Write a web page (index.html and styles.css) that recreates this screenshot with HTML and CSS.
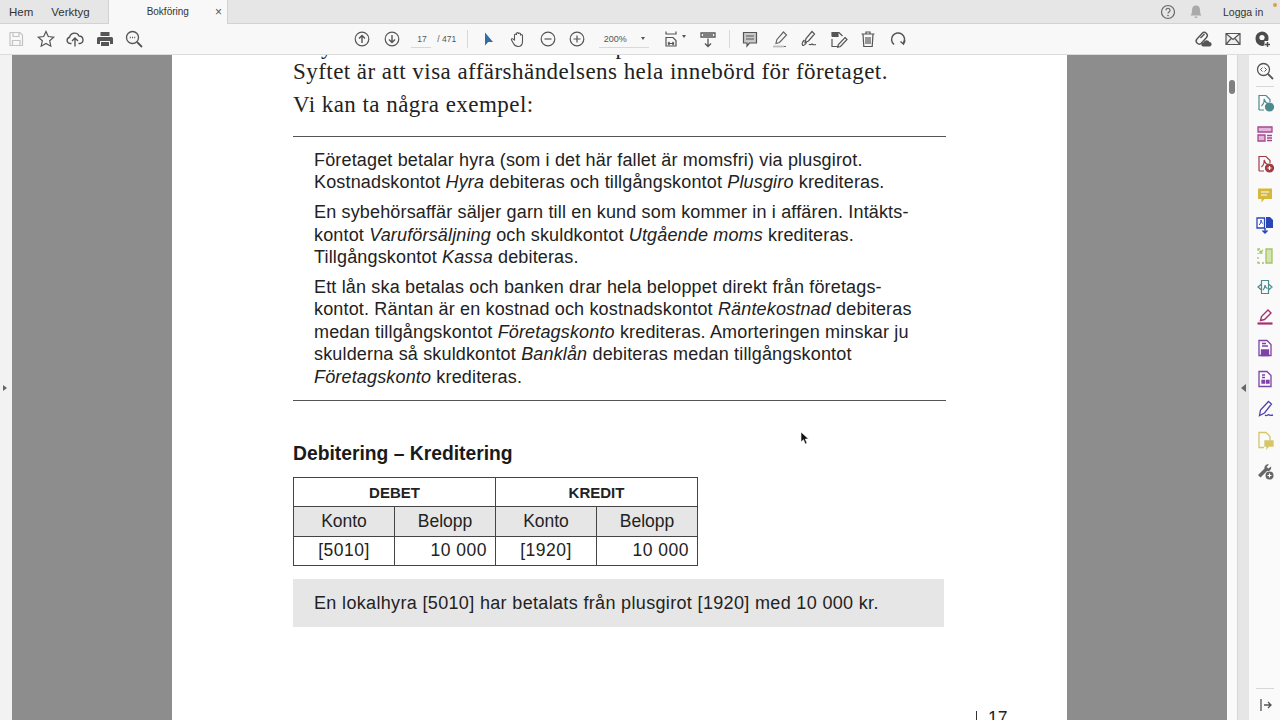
FILE: index.html
```html
<!DOCTYPE html>
<html lang="sv">
<head>
  <meta charset="UTF-8">
  <title>Bokföring</title>
  <link rel="stylesheet" href="styles.css">
</head>
<body>
  <header class="tabbar">
    <a class="tab-link link-hem">Hem</a>
    <a class="tab-link link-verktyg">Verktyg</a>
    <div class="doc-tab">
      <span class="doc-title">Bokföring</span>
      <span class="doc-close">×</span>
    </div>
    <div class="account">
      <svg class="ic" viewBox="0 0 20 20"><circle cx="10" cy="10" r="6.5" fill="none" stroke="#666" stroke-width="1.2"/><path d="M8 8.2a2 2 0 1 1 3 1.8c-.7.4-1 .8-1 1.6" fill="none" stroke="#666" stroke-width="1.2"/><circle cx="10" cy="13.6" r=".8" fill="#666"/></svg>
      <svg class="ic bell" viewBox="0 0 20 20"><path d="M10 3.5c-3 0-4 2.4-4 4.5 0 3-.6 4.300-1.500 5.500h11C14.600 12.300 14 11 14 8c0-2.100-1-4.500-4-4.500zM8.500 14.500h3a1.500 1.500 0 0 1-3 0z" fill="#aaa"/></svg>
      <span class="login">Logga in</span>
      <i class="dot"></i>
    </div>
  </header>

  <nav class="toolbar">
    <div class="tool-group">
      <span class="tool"><svg class="ic" viewBox="0 0 20 20" fill="none" stroke="#c4c4c4" stroke-width="1.200"><path d="M4 3.500h10l2.500 2.500v10.500H4zM7 3.500v4h6v-4M6.500 16.500v-5h7.500v5"/></svg></span>
      <span class="tool"><svg class="ic" viewBox="0 0 20 20" fill="none" stroke="#555" stroke-width="1.200"><path d="M10 2.500l2.300 5 5.400.6-4 3.700 1.100 5.400L10 14.500l-4.800 2.700 1.100-5.400-4-3.700 5.400-.6z"/></svg></span>
      <span class="tool"><svg class="ic" viewBox="0 0 20 20" fill="none" stroke="#555" stroke-width="1.400"><path d="M6.500 14.500H5a3.200 3.200 0 0 1-.4-6.300A5 5 0 0 1 14 7a3.800 3.800 0 0 1 1 7.500h-1.500M10 17.500v-8M7 12l3-3 3 3"/></svg></span>
      <span class="tool"><svg class="ic" viewBox="0 0 20 20"><path d="M5.500 3h9v4h-9zM3.500 8h13a1.500 1.500 0 0 1 1.500 1.500V15h-3v-3H5v3H2V9.500A1.500 1.500 0 0 1 3.500 8zM6 13h8v4H6z" fill="#555"/></svg></span>
      <span class="tool"><svg class="ic" viewBox="0 0 20 20" fill="none" stroke="#555" stroke-width="1.300"><circle cx="8.500" cy="8.500" r="6"/><path d="M13 13l5 5" stroke-width="1.800"/><path d="M5.800 8.500h1M8 8.500h1M10.200 8.500h1"/></svg></span>
    </div>

    <div class="tool-group center-tools">
      <span class="tool"><svg class="ic" viewBox="0 0 20 20" fill="none" stroke="#555" stroke-width="1.200"><circle cx="10" cy="10" r="6.800"/><path d="M10 14V6.500M7 9.500l3-3 3 3" stroke-width="1.400"/></svg></span>
      <span class="tool"><svg class="ic" viewBox="0 0 20 20" fill="none" stroke="#555" stroke-width="1.200"><circle cx="10" cy="10" r="6.800"/><path d="M10 6v7.500M7 10.500l3 3 3-3" stroke-width="1.400"/></svg></span>
      <div class="page-box"><span class="page-now">17</span><span class="page-total">/ 471</span></div>
      <i class="sep"></i>
      <span class="tool"><svg class="ic" viewBox="0 0 20 20"><path d="M6 3.500v13l3.200-3.600 4.800.1z" fill="#2f6ea8"/></svg></span>
      <span class="tool"><svg class="ic" viewBox="0 0 20 20" fill="none" stroke="#555" stroke-width="1.100"><path d="M6.500 11V6a1 1 0 0 1 2 0V4.500a1 1 0 0 1 2 0V5a1 1 0 0 1 2 0v1.500a1 1 0 0 1 2 0v6c0 3-1.500 5-4.500 5-2.500 0-3.500-1-4.500-3l-2-3.500c-.5-1 1-1.800 1.800-.8z"/></svg></span>
      <span class="tool"><svg class="ic" viewBox="0 0 20 20" fill="none" stroke="#555" stroke-width="1.200"><circle cx="10" cy="10" r="6.800"/><path d="M6.500 10h7"/></svg></span>
      <span class="tool"><svg class="ic" viewBox="0 0 20 20" fill="none" stroke="#555" stroke-width="1.200"><circle cx="10" cy="10" r="6.800"/><path d="M6.500 10h7M10 6.500v7"/></svg></span>
      <div class="zoom-box"><span>200%</span><i class="caret"></i></div>
      <span class="tool fit-tool"><svg class="ic" viewBox="0 0 20 20" fill="none" stroke="#555" stroke-width="1.200"><path d="M5 2.500v2.500h10V2.500M5 17V8.500h7l3 3V17zM7 14.500h6M7 14.500l1.500-1.500M7 14.500L8.500 16M13 14.500L11.500 13M13 14.500L11.500 16"/></svg><i class="caret small"></i></span>
      <span class="tool"><svg class="ic" viewBox="0 0 20 20" fill="none" stroke="#555" stroke-width="1.300"><path d="M3 4h14v4H3zM5 6h10" /><path d="M10 9.500v8M7 14.500l3 3 3-3"/></svg></span>
      <i class="sep"></i>
      <span class="tool"><svg class="ic" viewBox="0 0 20 20"><path d="M3.500 3.500h13v10.500H9.500L7 17v-3H3.500z" fill="#c9c9c9" stroke="#555" stroke-width="1.200"/><path d="M6 7h8M6 10h8" stroke="#555" stroke-width="1"/></svg></span>
      <span class="tool"><svg class="ic" viewBox="0 0 20 20" fill="none" stroke="#666" stroke-width="1.200"><path d="M13.500 3l3 3-7 7.500-3.500 1 .8-3.800zM3 17.500h13" /><path d="M3 17.500h11" stroke="#bbb" stroke-width="1.800"/></svg></span>
      <span class="tool"><svg class="ic" viewBox="0 0 20 20" fill="none" stroke="#555" stroke-width="1.200"><path d="M13 2.500l2.500 2.500-6 7-3.500 1.500 1-4zM5.500 11c-2 1.500-2.500 3.500-2 5 1 1 3-.5 4-2.500M10 15c1 1.500 2 .5 3 0 1 1 2 1 4 .5"/></svg></span>
      <span class="tool"><svg class="ic" viewBox="0 0 20 20" fill="none" stroke="#555" stroke-width="1.200"><path d="M3 7.500V3.500h7l3.500 3.500M3 10v7.500h6"/><path d="M3 4.500h6v3H3" fill="#555"/><path d="M16 8.500l2 2-6.500 7-2.800.7.700-2.700z"/></svg></span>
      <span class="tool"><svg class="ic" viewBox="0 0 20 20" fill="none" stroke="#555" stroke-width="1.200"><path d="M3.500 5h13M8 5V3h4v2M5 5l.8 12.500h8.400L15 5M8 8v7M10 8v7M12 8v7"/></svg></span>
      <span class="tool"><svg class="ic" viewBox="0 0 20 20" fill="none" stroke="#555" stroke-width="1.500"><path d="M6 15.500A6.500 6.500 0 1 1 15.500 14"/><path d="M12.500 12.500l3 2.500 1.500-3.500"/></svg></span>
    </div>

    <div class="tool-group right-tools">
      <span class="tool"><svg class="ic" viewBox="0 0 20 20"><path d="M9 4.500a3 3 0 0 1 4.500 4l-5 5.500a3 3 0 0 1-4.500-4zM7.500 9l4-4" fill="none" stroke="#555" stroke-width="1.400"/><path d="M10 17.500a2 2 0 0 1 .5-4 3.200 3.200 0 0 1 6-.5 2.300 2.300 0 0 1 .5 4.500z" fill="#555"/></svg></span>
      <span class="tool"><svg class="ic" viewBox="0 0 20 20" fill="#eee" stroke="#555" stroke-width="1.200"><path d="M3 4.500h14v11H3zM3 4.500l7 6 7-6M3 15.500l5.500-6.500M17 15.500L11.500 9"/></svg></span>
      <span class="tool"><svg class="ic" viewBox="0 0 20 20"><path d="M10 2.500a6.500 6.500 0 0 1 6.500 7c0 1-.2 1.800-.5 2.500h-3.500v4.500a7 7 0 0 1-2.500.5A7.300 7.300 0 0 1 3.500 10 6.800 6.800 0 0 1 10 2.500z" fill="#4b4b4b"/><circle cx="10" cy="8.500" r="2.600" fill="#f8f8f8"/><path d="M15.500 13v5M13 15.500h5" stroke="#4b4b4b" stroke-width="1.400"/></svg></span>
    </div>
  </nav>

  <main class="workspace">
    <div class="left-strip"><i class="arrow-right"></i></div>
    <section class="viewer">
      <article class="page">
        <p class="cut-line">y<span class="cut-gap">p</span></p>
        <p class="serif">Syftet är att visa affärshändelsens hela innebörd för företaget.</p>
        <p class="serif">Vi kan ta några exempel:</p>

        <div class="examples">
          <p>Företaget betalar hyra (som i det här fallet är momsfri) via plusgirot.<br>
            Kostnadskontot <em>Hyra</em> debiteras och tillgångskontot <em>Plusgiro</em> krediteras.</p>
          <p>En sybehörsaffär säljer garn till en kund som kommer in i affären. Intäkts-<br>
            kontot <em>Varuförsäljning</em> och skuldkontot <em>Utgående moms</em> krediteras.<br>
            Tillgångskontot <em>Kassa</em> debiteras.</p>
          <p>Ett lån ska betalas och banken drar hela beloppet direkt från företags-<br>
            kontot. Räntan är en kostnad och kostnadskontot <em>Räntekostnad</em> debiteras<br>
            medan tillgångskontot <em>Företagskonto</em> krediteras. Amorteringen minskar ju<br>
            skulderna så skuldkontot <em>Banklån</em> debiteras medan tillgångskontot<br>
            <em>Företagskonto</em> krediteras.</p>
        </div>

        <h2>Debitering – Kreditering</h2>
        <table class="ledger">
          <tr><th colspan="2">DEBET</th><th colspan="2">KREDIT</th></tr>
          <tr class="shade"><td>Konto</td><td>Belopp</td><td>Konto</td><td>Belopp</td></tr>
          <tr class="values"><td>[5010]</td><td class="num">10 000</td><td>[1920]</td><td class="num">10 000</td></tr>
        </table>
        <p class="note">En lokalhyra [5010] har betalats från plusgirot [1920] med 10 000 kr.</p>
        <div class="page-number">17</div>
      </article>
      <svg class="cursor" viewBox="0 0 10 14"><path d="M1 1v10l2.500-2.300L5.200 13l1.800-.8-1.700-4.100 3.200-.2z" fill="#111" stroke="#fff" stroke-width=".6"/></svg>
    </section>
    <div class="scrollbar"><i class="thumb"></i></div>
    <div class="splitter"><i class="arrow-left"></i></div>

    <aside class="side-panel">
      <svg class="ic" viewBox="0 0 20 20" fill="none" stroke="#555" stroke-width="1.300"><circle cx="8.500" cy="8.500" r="6"/><path d="M13 13l5 5" stroke-width="1.800"/><path d="M7.500 6.500l-2 2 2 2M9.500 6.500l2 2-2 2" stroke-width="1"/></svg>
      <i class="panel-line"></i>
      <svg class="ic" viewBox="0 0 20 20" fill="none" stroke="#4d8a8c" stroke-width="1.200"><path d="M4 17V2.500h7l4 4V9M4 17h5M6.500 13c2-2 3-5 2.500-7 1 3 2 4 4 4.500"/><circle cx="14.500" cy="14" r="4" fill="#4d8a8c"/></svg>
      <svg class="ic" viewBox="0 0 20 20" fill="none" stroke="#a3488f" stroke-width="1.300"><path d="M3 3h14v5H3z" fill="#e4b5da"/><path d="M3 11h7v6H3z" fill="#e4b5da"/><path d="M12 11.500h5M12 14h5M12 16.500h5"/></svg>
      <svg class="ic" viewBox="0 0 20 20" fill="none" stroke="#a13a44" stroke-width="1.200"><path d="M4 17V2.500h7l4 4V9M4 17h5M6.500 13c2-2 3-5 2.500-7 1 3 2 4 4 4.500"/><circle cx="14.500" cy="14" r="4" fill="#a13a44"/><path d="M12.500 14h4M14.500 12v4" stroke="#fff"/></svg>
      <svg class="ic" viewBox="0 0 20 20"><path d="M3 3.500h14v10.500H9.500L6.500 17.500V14H3z" fill="#d4b93c"/><path d="M6 7h8M6 10h6" stroke="#fff" stroke-width="1.200"/></svg>
      <svg class="ic" viewBox="0 0 20 20"><path d="M2 3h7.500v10H2z" fill="#fff" stroke="#2b47b5" stroke-width="1.300"/><path d="M11 2h4l3 3v8h-7z" fill="#2b47b5"/><path d="M10 13v5M7.500 15.500l2.500 2.500 2.500-2.500" fill="none" stroke="#2b47b5" stroke-width="1.500"/><path d="M4 10c1.500-1 2-3 2-5 .2 2 .8 3 2 3.500" fill="none" stroke="#2b47b5"/></svg>
      <svg class="ic" viewBox="0 0 20 20" fill="none" stroke="#a5c26a" stroke-width="1.300"><path d="M11 3h6v14h-6z" fill="#d5e3ac"/><path d="M3 8v-1M3 11v2M3 15.500V17h2M7 17h2M3 5V3h2" /><path d="M8 4L5 7M5 4.500V7h2.500"/></svg>
      <svg class="ic" viewBox="0 0 20 20" fill="none" stroke="#4d8a8c" stroke-width="1.200"><path d="M6.500 3.500h7v13h-7zM6.500 7L3 10l3.500 3M13.500 7l3.500 3-3.500 3M8 13c1.500-1.500 2-3 2-5 .3 2 1 3 2.500 3.500"/></svg>
      <svg class="ic" viewBox="0 0 20 20" fill="none" stroke="#a3326f" stroke-width="1.400"><path d="M13 3l3 3-6.500 6.500-4 1 1-4z"/><path d="M2.500 16.500h15" stroke-width="2.200"/></svg>
      <svg class="ic" viewBox="0 0 20 20" fill="none" stroke="#7d43a8" stroke-width="1.300"><path d="M4 2.500h8l4 4v11H4z"/><path d="M6.500 12h7v5.500h-7z" fill="#7d43a8"/><path d="M7 5.500h4M7 8h6"/></svg>
      <svg class="ic" viewBox="0 0 20 20" fill="none" stroke="#7d43a8" stroke-width="1.300"><path d="M4 2.500h8l4 4v11H4z"/><path d="M7 6h3M7 8.500h3"/><path d="M7 11.500h2.500V14H7zM11.500 11.500H14V14h-2.500z" fill="#7d43a8"/></svg>
      <svg class="ic" viewBox="0 0 20 20" fill="none" stroke="#4f42b0" stroke-width="1.300"><path d="M13.500 2.500l3 2.500-7 9-5 2.500 1-5.500zM10 16c1.500 1.500 2.500 0 3.500-.5 1 1 2.500 1 4.500.5"/></svg>
      <svg class="ic" viewBox="0 0 20 20" fill="none" stroke="#d6c66a" stroke-width="1.300"><path d="M9 17.500H4v-15h7l4 4v4"/><path d="M10 11h8v5h-4.500L12 18v-2h-2z" fill="#d6c66a"/></svg>
      <svg class="ic" viewBox="0 0 20 20"><path d="M14 3.500a3.500 3.500 0 0 0-4.500 4L3 14l2.500 2.500L12 10a3.500 3.500 0 0 0 4-4.500l-2.500 2-2-1.500z" fill="#666"/><circle cx="14.500" cy="14.500" r="4" fill="#666"/><path d="M12.500 14.500h4M14.500 12.500v4" stroke="#fff" stroke-width="1.200"/></svg>
      <i class="panel-line bottom-line"></i>
      <svg class="ic" viewBox="0 0 20 20" fill="none" stroke="#555" stroke-width="1.300"><path d="M6 4v12M9 10h7M13 7l3 3-3 3"/></svg>
    </aside>
  </main>
</body>
</html>
```

FILE: styles.css
```css
* {
  box-sizing: border-box;
}
html, body {
  height: 100%;
}
body {
  margin: 0;
  overflow: hidden;
  font-family: "Liberation Sans", Arial, sans-serif;
  color: #222;
  display: flex;
  flex-direction: column;
}
p {
  margin: 0;
}
.ic {
  width: 20px;
  height: 20px;
  flex: none;
  display: block;
}

/* top tabs */
.tabbar {
  height: 24px;
  flex: none;
  display: flex;
  align-items: center;
  background-color: #e6e6e6;
  border-bottom: 1px solid #d2d2d2;
  font-size: 11.5px;
  color: #333;
}
.tab-link {
  line-height: 22px;
}
.link-hem {
  margin-left: 9px;
}
.link-verktyg {
  margin-left: 18px;
}
.doc-tab {
  width: 120px;
  height: 24px;
  margin-left: 18px;
  display: flex;
  align-items: center;
  background-color: #f8f8f8;
  border-left: 1px solid #d2d2d2;
  border-right: 1px solid #d2d2d2;
}
.doc-title {
  margin-left: 38px;
  font-size: 10px;
}
.doc-close {
  margin-left: 26px;
  font-size: 12px;
  color: #555;
}
.account {
  margin-left: auto;
  display: flex;
  align-items: center;
  position: relative;
  width: 122px;
  height: 24px;
  gap: 8px;
  padding-left: 0;
}
.login {
  margin-left: 9px;
  font-size: 10.5px;
}
.dot {
  position: absolute;
  right: 3px;
  top: 3px;
  width: 4px;
  height: 4px;
  border-radius: 50%;
  background-color: #d9a14c;
}

/* toolbar */
.toolbar {
  height: 31px;
  flex: none;
  display: flex;
  align-items: center;
  padding: 0 3.25px 0 1.25px;
  background-color: #f8f8f8;
  border-bottom: 1px solid #dcdcdc;
}
.tool-group {
  display: flex;
  align-items: center;
}
.center-tools {
  margin-left: 198.5px;
}
.right-tools {
  margin-left: auto;
}
.tool {
  width: 29.5px;
  height: 30px;
  display: flex;
  align-items: center;
  justify-content: center;
}
.sep {
  width: 1px;
  height: 18px;
  margin: 0 5.5px 0 6.75px;
  background-color: #d8d8d8;
}
.page-box {
  width: 54.25px;
  display: flex;
  align-items: center;
  font-size: 8.5px;
  color: #555;
}
.page-now {
  width: 20px;
  margin-left: 5px;
  padding: 3px 0 3px 6px;
  border-bottom: 1px solid #d8d8d8;
}
.page-total {
  margin-left: 6px;
}
.zoom-box {
  width: 50px;
  margin: 0 7px;
  display: flex;
  justify-content: space-between;
  align-items: center;
  padding: 3px 4px 3px 5px;
  border-bottom: 1px solid #d8d8d8;
  font-size: 9px;
  color: #555;
}
.caret {
  width: 0;
  height: 0;
  border-left: 2.500px solid transparent;
  border-right: 2.500px solid transparent;
  border-top: 3px solid #555;
}
.fit-tool {
  width: 37px;
  gap: 1px;
  justify-content: flex-start;
  padding-left: 5px;
}
.fit-tool .small {
  margin-bottom: 6px;
}

/* main area */
.workspace {
  flex: 1;
  min-height: 0;
  display: flex;
}
.left-strip {
  width: 12px;
  flex: none;
  display: flex;
  align-items: center;
  padding-left: 3px;
  background-color: #f2f2f2;
}
.arrow-right {
  border-top: 3px solid transparent;
  border-bottom: 3px solid transparent;
  border-left: 4px solid #666;
}
.viewer {
  flex: 1;
  min-width: 0;
  position: relative;
  overflow: hidden;
  background-color: #8d8d8d;
  padding-left: 160px;
}
.page {
  width: 895px;
  height: 720px;
  margin-top: -17px;
  padding: 0 121px;
  background-color: #fff;
  position: relative;
}
.cut-line {
  height: 17px;
  padding-left: 28px;
  font: 23px/17px "Liberation Serif", serif;
}
.cut-gap {
  margin-left: 283px;
}
.serif {
  font-family: "Liberation Serif", serif;
  font-size: 23px;
  letter-spacing: .45px;
  line-height: 33px;
  color: #222;
}
.examples {
  width: 653px;
  margin-top: 15px;
  padding: 12px 0 12px 21px;
  border-top: 1px solid #555;
  border-bottom: 1px solid #555;
  font-size: 18px;
  letter-spacing: .16px;
  line-height: 22.4px;
}
.examples p + p {
  margin-top: 7.500px;
}
h2 {
  margin: 41px 0 0;
  font-size: 19.3px;
  line-height: 24px;
  color: #1a1a1a;
}
.ledger {
  width: 405px;
  margin-top: 11px;
  table-layout: fixed;
  border-collapse: collapse;
  font-size: 17.5px;
}
.ledger th, .ledger td {
  height: 29.300px;
  padding: 0;
  border: 1px solid #444;
  text-align: center;
  font-weight: normal;
}
.ledger th {
  font-weight: bold;
  font-size: 15px;
}
.shade td {
  background-color: #e6e6e6;
}
.values td {
  letter-spacing: .5px;
}
.ledger .num {
  text-align: right;
  padding-right: 8px;
}
.note {
  width: 651px;
  height: 48px;
  margin-top: 13px;
  padding-left: 21px;
  line-height: 48px;
  font-size: 18px;
  letter-spacing: .34px;
  background-color: #e6e6e6;
}
.page-number {
  position: absolute;
  left: 804px;
  top: 668px;
  padding-left: 12px;
  font-size: 17.5px;
  line-height: 24px;
}
.page-number::before {
  content: "";
  position: absolute;
  left: 0;
  top: 5px;
  height: 20px;
  border-left: 1px solid #333;
}
.cursor {
  position: absolute;
  left: 788px;
  top: 376px;
  width: 10px;
  height: 14px;
}

/* right side */
.scrollbar {
  width: 10px;
  flex: none;
  background-color: #fafafa;
  padding: 25px 2px 0;
}
.thumb {
  display: block;
  width: 6px;
  height: 14px;
  border-radius: 3px;
  background-color: #808080;
}
.splitter {
  width: 12px;
  flex: none;
  display: flex;
  align-items: center;
  justify-content: center;
  background-color: #e6e6e6;
  border-left: 1px solid #d8d8d8;
}
.arrow-left {
  border-top: 4px solid transparent;
  border-bottom: 4px solid transparent;
  border-right: 5px solid #666;
}
.side-panel {
  width: 31px;
  flex: none;
  display: flex;
  flex-direction: column;
  align-items: center;
  gap: 10.650px;
  padding: 6px 0 5px;
  background-color: #fafafa;
}
.panel-line {
  display: block;
  flex: none;
  width: 18px;
  height: 1px;
  margin: -5.2px 0;
  background-color: #d8d8d8;
}
.bottom-line {
  margin: auto 0 -4.7px;
}
```
